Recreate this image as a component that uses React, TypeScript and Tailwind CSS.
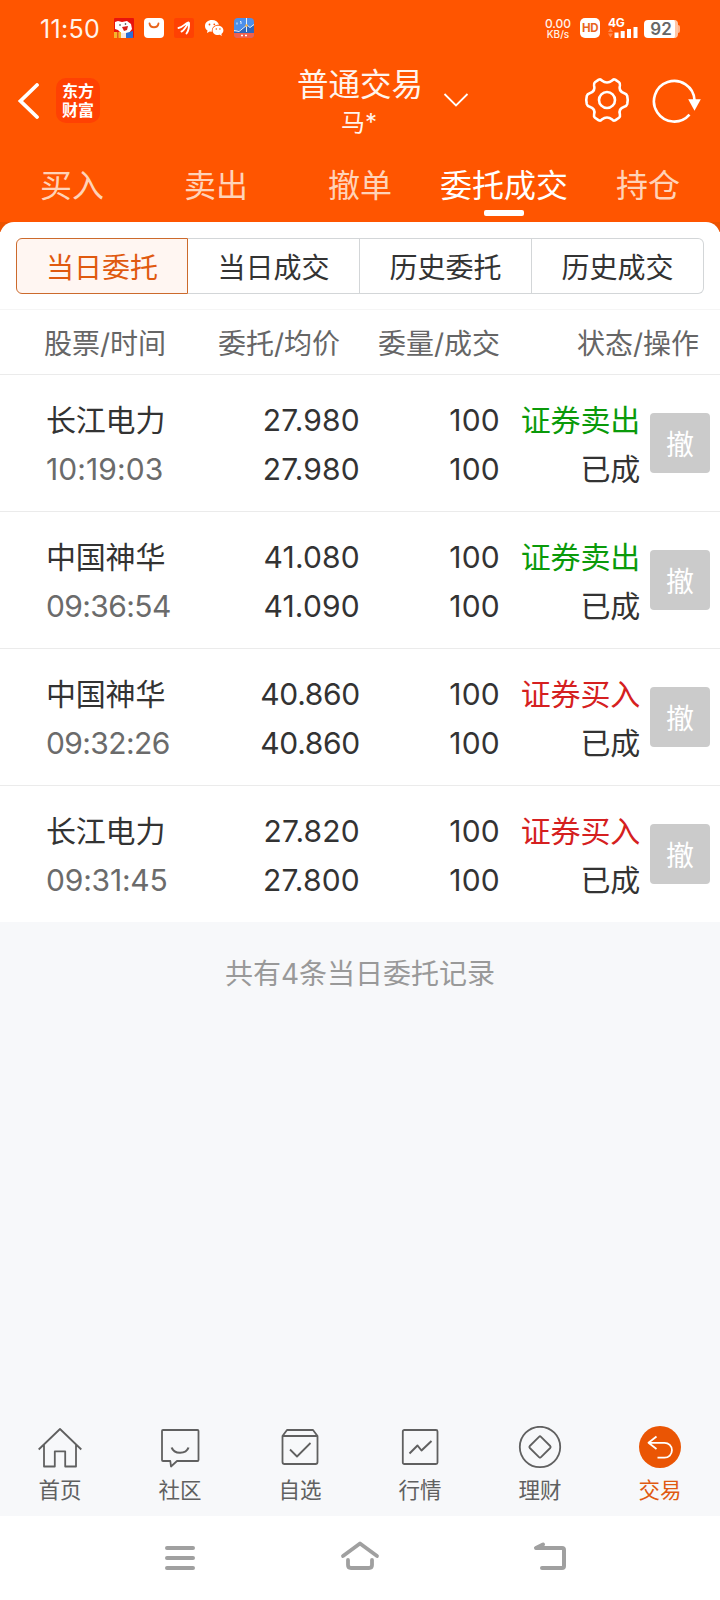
import React from "react";

const rows = [
  { name: "长江电力", time: "10:19:03", timeGap: "tracking-[0.1px]", price: "27.980", avg: "27.980", gap: "tracking-[0.2px]", side: "证券卖出", sell: true },
  { name: "中国神华", time: "09:36:54", timeGap: "tracking-[-0.6px]", price: "41.080", avg: "41.090", gap: "tracking-[0.2px]", side: "证券卖出", sell: true },
  { name: "中国神华", time: "09:32:26", timeGap: "tracking-[-0.6px]", price: "40.860", avg: "40.860", gap: "tracking-[-0.3px]", side: "证券买入", sell: false },
  { name: "长江电力", time: "09:31:45", timeGap: "tracking-[-0.2px]", price: "27.820", avg: "27.800", gap: "tracking-[0.2px]", side: "证券买入", sell: false },
];

function StatusBar() {
  return (
    <div className="flex h-14 items-center pl-10 pr-[40px] text-[#fff3ea]">
      <span className="w-[74px] whitespace-nowrap pt-[1px] text-[25px] leading-[30px] tracking-[0.3px]">11:50</span>
      <div className="flex gap-[10px]">
        <svg width="20" height="20" viewBox="0 0 20 20">
          <rect width="20" height="20" rx="1" fill="#e8130c" />
          <path d="M1 4l3-1 4 1 5-1 4 3 1 5-3 4-7 1-4-4-3-1z" fill="#fff" />
          <path d="M8 9l6-1-1 4-3 1z" fill="#d8201a" />
          <circle cx="6" cy="7" r=".8" fill="#222" /><circle cx="11.500" cy="6" r=".8" fill="#222" />
          <path d="M0 14h7v6H0z" fill="#f5b52a" /><path d="M3 14h1.500v6H3z" fill="#e8561c" />
          <path d="M12 15l7-2v7h-7z" fill="#2a6fd6" /><path d="M7 15h5v5H7z" fill="#f8e9e0" />
        </svg>
        <svg width="20" height="20" viewBox="0 0 20 20">
          <rect width="20" height="20" rx="4" fill="#fff" />
          <path d="M5.500 5.500c.8 5 8.200 5 9 0" fill="none" stroke="#e8641c" strokeWidth="1.800" strokeLinecap="round" />
        </svg>
        <svg width="20" height="20" viewBox="0 0 20 20">
          <rect width="20" height="20" rx="2" fill="#ff4103" />
          <path d="M4.500 10C9 9.500 10.500 5.500 14.500 4.500M7.500 13.500C10 12.500 12 8.500 14.500 5M12.500 15.500C15 12 15.200 8 15 5" fill="none" stroke="#fff" strokeWidth="1.900" strokeLinecap="round" />
        </svg>
        <svg width="20" height="20" viewBox="0 0 20 20">
          <path d="M8 2C4 2 1 4.500 1 8c0 2 1 3.500 2.500 4.500L3 15l2.800-1.500 2 .3C7.500 9 11 6.500 15 6.700 14 4 11.500 2 8 2z" fill="#fff" />
          <path d="M14 7.700c-3 0-5.400 2-5.400 4.700s2.400 4.700 5.400 4.700l1.800-.3 2 1.200-.4-2c1.200-.9 2-2.200 2-3.600 0-2.700-2.400-4.700-5.400-4.700z" fill="#fff" />
          <circle cx="5.500" cy="6.500" r=".9" fill="#f50" /><circle cx="10.300" cy="6.300" r=".9" fill="#f50" />
          <circle cx="12.300" cy="11" r=".8" fill="#f50" /><circle cx="15.900" cy="11" r=".8" fill="#f50" />
        </svg>
        <svg width="20" height="20" viewBox="0 0 20 20">
          <rect width="20" height="20" rx="4" fill="#4d8fea" />
          <path d="M0 14l6-2 7-5 3 2 4-2v8H0z" fill="#2f68bd" />
          <path d="M0 15h20v1a4 4 0 0 1-4 4H4a4 4 0 0 1-4-4z" fill="#f2604c" />
          <path d="M0 12.500l5 1 8-6.500 3 2.500 4-3M3 6.500V4.500M6 3.500h1v2.500M12.500 0v14" fill="none" stroke="#e7f0fa" strokeWidth="1" />
          <circle cx="12.500" cy="7.500" r="1.300" fill="#f6b13f" />
          <path d="M7 17.500h2M11 17.500h2" stroke="#fff" strokeWidth="1.500" />
        </svg>
      </div>
      <div className="ml-auto flex items-center gap-[8px]">
        <div className="flex w-[28px] flex-col items-center whitespace-nowrap pt-[1px] font-medium">
          <span className="text-[12px] leading-[11px]">0.00</span>
          <span className="text-[10px] leading-[10px]">KB/s</span>
        </div>
        <div className="flex h-5 w-5 items-center justify-center rounded-[5px] bg-white text-[11.500px] font-bold leading-[14px] tracking-[-0.5px] text-[#e8641c]">HD</div>
        <svg width="32" height="24" viewBox="0 0 32 24">
          <text x="0" y="11" fontSize="12" fontWeight="700" fill="#fff" letterSpacing="-.3">4G</text>
          <path d="M0 16l2.500-4L5 16zM0 17.500L2.500 21.500 5 17.500z" fill="#ff8a50" />
          <path d="M8.500 22v-5.500M14.700 22v-7M21 22v-9M27.500 22v-11" stroke="#fff" strokeWidth="4" />
        </svg>
        <div className="-ml-[4px] flex items-center pt-[2px]">
          <div className="flex h-[18px] w-[34px] items-center justify-center rounded-[4px] border-r-[3px] border-[#ffc6a5] bg-white pl-[3px] text-[17px] font-semibold leading-[18px] text-[#666]">92</div>
          <div className="h-[8px] w-[2px] rounded-r bg-[#ffb48c]" />
        </div>
      </div>
    </div>
  );
}

function Header() {
  return (
    <div className="grid h-[94px] grid-cols-[1fr_auto_1fr] text-[#fff5ee]">
      <div className="flex items-start pl-[17px] pt-[22px]">
        <svg className="mt-[5px]" width="24" height="36" viewBox="0 0 24 36">
          <path d="M20 2L3.500 18 20 34" fill="none" stroke="#fff" strokeWidth="3.800" strokeLinecap="round" />
        </svg>
        <div className="ml-[15px] h-[45px] w-[44px] whitespace-pre-line rounded-[10px] bg-[#ff4103] pt-[3px] text-center font-['Noto_Sans_CJK_SC',sans-serif] text-[16px] font-bold leading-[19px] text-white">
          {"东方\n财富"}
        </div>
      </div>
      <div className="relative w-[128px] pt-[10px] text-center">
        <div className="whitespace-nowrap text-[31.500px] leading-[38px]">普通交易</div>
        <div className="pr-[2px] text-[24px] leading-[38px]">马*</div>
        <svg className="absolute left-[146px] top-[35px]" width="28" height="18" viewBox="0 0 28 18">
          <path d="M2.500 3L14 14.500 25.500 3" fill="none" stroke="#fff" strokeWidth="1.800" />
        </svg>
      </div>
      <div className="flex items-start justify-end gap-[20px] pr-[19px] pt-[21px]">
        <svg width="48" height="46" viewBox="0 0 48 46" fill="none" stroke="#fff" strokeWidth="2.600" strokeLinejoin="round">
          <path d="M15.800 2.600Q17.600 1.700 18.800 3.400Q24 7.600 29.200 3.400Q30.400 1.700 32.200 2.600L36 5.200Q37.400 6.400 36.900 8.500Q35.300 14.300 41.300 16.200Q43.600 16.900 44.200 18.900Q45.300 23 44.200 27.100Q43.600 29.100 41.300 29.800Q35.300 31.700 36.900 37.500Q37.400 39.600 36 40.800L32.200 43.400Q30.400 44.300 29.200 42.600Q24 38.400 18.800 42.600Q17.600 44.300 15.800 43.400L12 40.800Q10.600 39.600 11.100 37.500Q12.700 31.700 6.700 29.800Q4.400 29.100 3.800 27.100Q2.700 23 3.800 18.900Q4.400 16.900 6.700 16.200Q12.700 14.300 11.100 8.500Q10.600 6.400 12 5.200Z" />
          <circle cx="24" cy="23" r="8" />
        </svg>
        <svg className="mt-[1px]" width="50" height="46" viewBox="0 0 50 46">
          <path d="M38.500 36.700A20.300 20.300 0 1 1 43.500 22" fill="none" stroke="#fff" strokeWidth="2.600" />
          <path d="M37.200 21.300H49.800L43.500 32.800z" fill="#fff" />
        </svg>
      </div>
    </div>
  );
}

function Tabs() {
  return (
    <div className="grid h-[72px] grid-cols-5 text-center text-[32px] leading-[72px] text-[#ffd3b8]">
      <span>买入</span>
      <span>卖出</span>
      <span>撤单</span>
      <div className="relative text-white">
        <span className="whitespace-nowrap">委托成交</span>
        <span className="absolute left-[52px] top-[60px] h-[6px] w-[40px] rounded-[2px] bg-white" />
      </div>
      <span>持仓</span>
    </div>
  );
}

const iconProps = { width: 46, height: 46, viewBox: "0 0 46 46", fill: "none", stroke: "#606060", strokeWidth: 1.8, strokeLinejoin: "round" as const };

const navItems = [
  { label: "首页", icon: <svg {...iconProps}><path d="M1.700 23.500L23 3 44.300 23.500M7 19V40.500H17.800V25.300H28.200V40.500H39V19" /></svg> },
  { label: "社区", icon: <svg {...iconProps}><path d="M5 5q0-1 1-1H40.500q1 0 1 1V34q0 1-1 1H20L14 40.500 13.300 35H6q-1 0-1-1z" /><path d="M14.700 21.500C17 28.500 29 28.500 31.500 21.500" strokeWidth="2.200" /></svg> },
  { label: "自选", icon: <svg {...iconProps}><path d="M5.500 10L10 4H36L40.500 10V36q0 2-2 2H7.500q-2 0-2-2zM5.500 10H40.500M13 23.500L20 30.500 33.500 17" /></svg> },
  { label: "行情", icon: <svg {...iconProps}><rect x="5.800" y="4" width="34.700" height="34" rx="1.500" /><path d="M12.500 27.500L20.500 19.500 24.500 24.500 34.500 15" strokeWidth="2" /></svg> },
  { label: "理财", icon: <svg {...iconProps}><circle cx="23" cy="21" r="20.200" /><path d="M22 10.800q1-1 2 0L33.200 20q1 1 0 2L24 31.200q-1 1-2 0L12.800 22q-1-1 0-2z" /></svg> },
  { label: "交易", icon: <svg {...iconProps}><circle cx="23" cy="21" r="21" fill="#ea5504" stroke="none" /><path d="M19.500 10.500L11.500 16.800 19.500 23M12 16.800H27.500A7.300 7.300 0 0 1 27.500 31.700H20.500" stroke="#fff" /></svg> },
];

export default function App() {
  return (
    <div className="flex h-[1600px] w-[720px] flex-col overflow-hidden bg-[#f7f8fa] font-['Inter','Noto_Sans_CJK_SC',sans-serif] text-[#333]">
      <div className="h-[222px] shrink-0 bg-[#ff5500]">
        <StatusBar />
        <Header />
        <Tabs />
      </div>
      <div className="bg-[linear-gradient(#ec5200_10px,#fff_10px)]">
        <div className="rounded-t-[14px] bg-white">
          <div className="h-[88px] border-b border-[#f5f5f5] px-4 pt-4">
            <div className="grid h-14 grid-cols-4 grid-rows-[56px] text-center text-[28px] leading-[58px]">
              <div className="rounded-l-[6px] border border-[#cc6a2c] bg-[#fff6f2] text-[#e0590f]">当日委托</div>
              <div className="border-y border-r border-[#d3d6d8]">当日成交</div>
              <div className="border-y border-r border-[#d3d6d8]">历史委托</div>
              <div className="rounded-r-[6px] border-y border-r border-[#d3d6d8]">历史成交</div>
            </div>
          </div>
          <div className="flex h-[65px] whitespace-nowrap border-b border-[#ebebeb] text-[28px] leading-[68px] text-[#666]">
            <span className="w-[166px] text-right">股票/时间</span>
            <span className="w-[174px] text-right">委托/均价</span>
            <span className="w-[160px] text-right">委量/成交</span>
            <span className="w-[199px] text-right">状态/操作</span>
          </div>
          {rows.map((r, i) => (
            <div key={r.time} className={`flex pt-[21px] text-[30px] leading-[49px] ${i < 3 ? "h-[137px] border-b border-[#ebebeb]" : "h-[136px]"}`}>
              <div className="w-[190px] pl-[46px]">
                <div className="tracking-[-0.2px]">{r.name}</div>
                <div className={`text-[#6b6b6b] ${r.timeGap}`}>{r.time}</div>
              </div>
              <div className={`w-[170px] text-right ${r.gap}`}><div>{r.price}</div><div>{r.avg}</div></div>
              <div className="w-[140px] text-right tracking-[0.2px]"><div>100</div><div>100</div></div>
              <div className="w-[140px] text-right tracking-[-0.2px]">
                <div className={r.sell ? "text-[#0a9a0a]" : "text-[#d52020]"}>{r.side}</div>
                <div>已成</div>
              </div>
              <div className="ml-[10px] mt-[17px] h-[60px] w-[60px] rounded-[4px] bg-[#cbcbcb] text-center text-[28px] leading-[64px] text-white">撤</div>
            </div>
          ))}
        </div>
      </div>
      <div className="pt-[31px] text-center text-[28px] leading-[42px] text-[#999]">共有4条当日委托记录</div>
      <div className="mt-auto grid h-[116px] shrink-0 grid-cols-6 pt-[26px]">
        {navItems.map((n, i) => (
          <div key={n.label} className={`flex flex-col items-center text-[21.500px] leading-[36px] ${i === 5 ? "text-[#e05a12]" : "text-[#606060]"}`}>
            {n.icon}
            <span>{n.label}</span>
          </div>
        ))}
      </div>
      <div className="grid h-[84px] shrink-0 grid-cols-[1fr_8px_1fr] bg-white">
        <svg className="ml-[164px] mt-[28px]" width="32" height="28" viewBox="0 0 32 28"><path d="M3 4H29M3 14H29M3 24H29" stroke="#a0a0a0" strokeWidth="4" strokeLinecap="round" /></svg>
        <div className="relative"><svg className="absolute -left-[16px] top-[22px]" width="40" height="34" viewBox="0 0 40 34" fill="none" stroke="#a0a0a0" strokeWidth="3.800" strokeLinecap="round" strokeLinejoin="round"><path d="M3 18L20 5.500 37 18M8 22V27q0 3 3 3H29q3 0 3-3V22" /></svg></div>
        <svg className="ml-[168px] mt-[24px]" width="36" height="32" viewBox="0 0 36 32" fill="none" stroke="#a0a0a0" strokeWidth="4" strokeLinecap="round" strokeLinejoin="round"><path d="M11 4.500L4 8H30q2 0 2 2V26q0 2-2 2H10" /></svg>
      </div>
    </div>
  );
}
